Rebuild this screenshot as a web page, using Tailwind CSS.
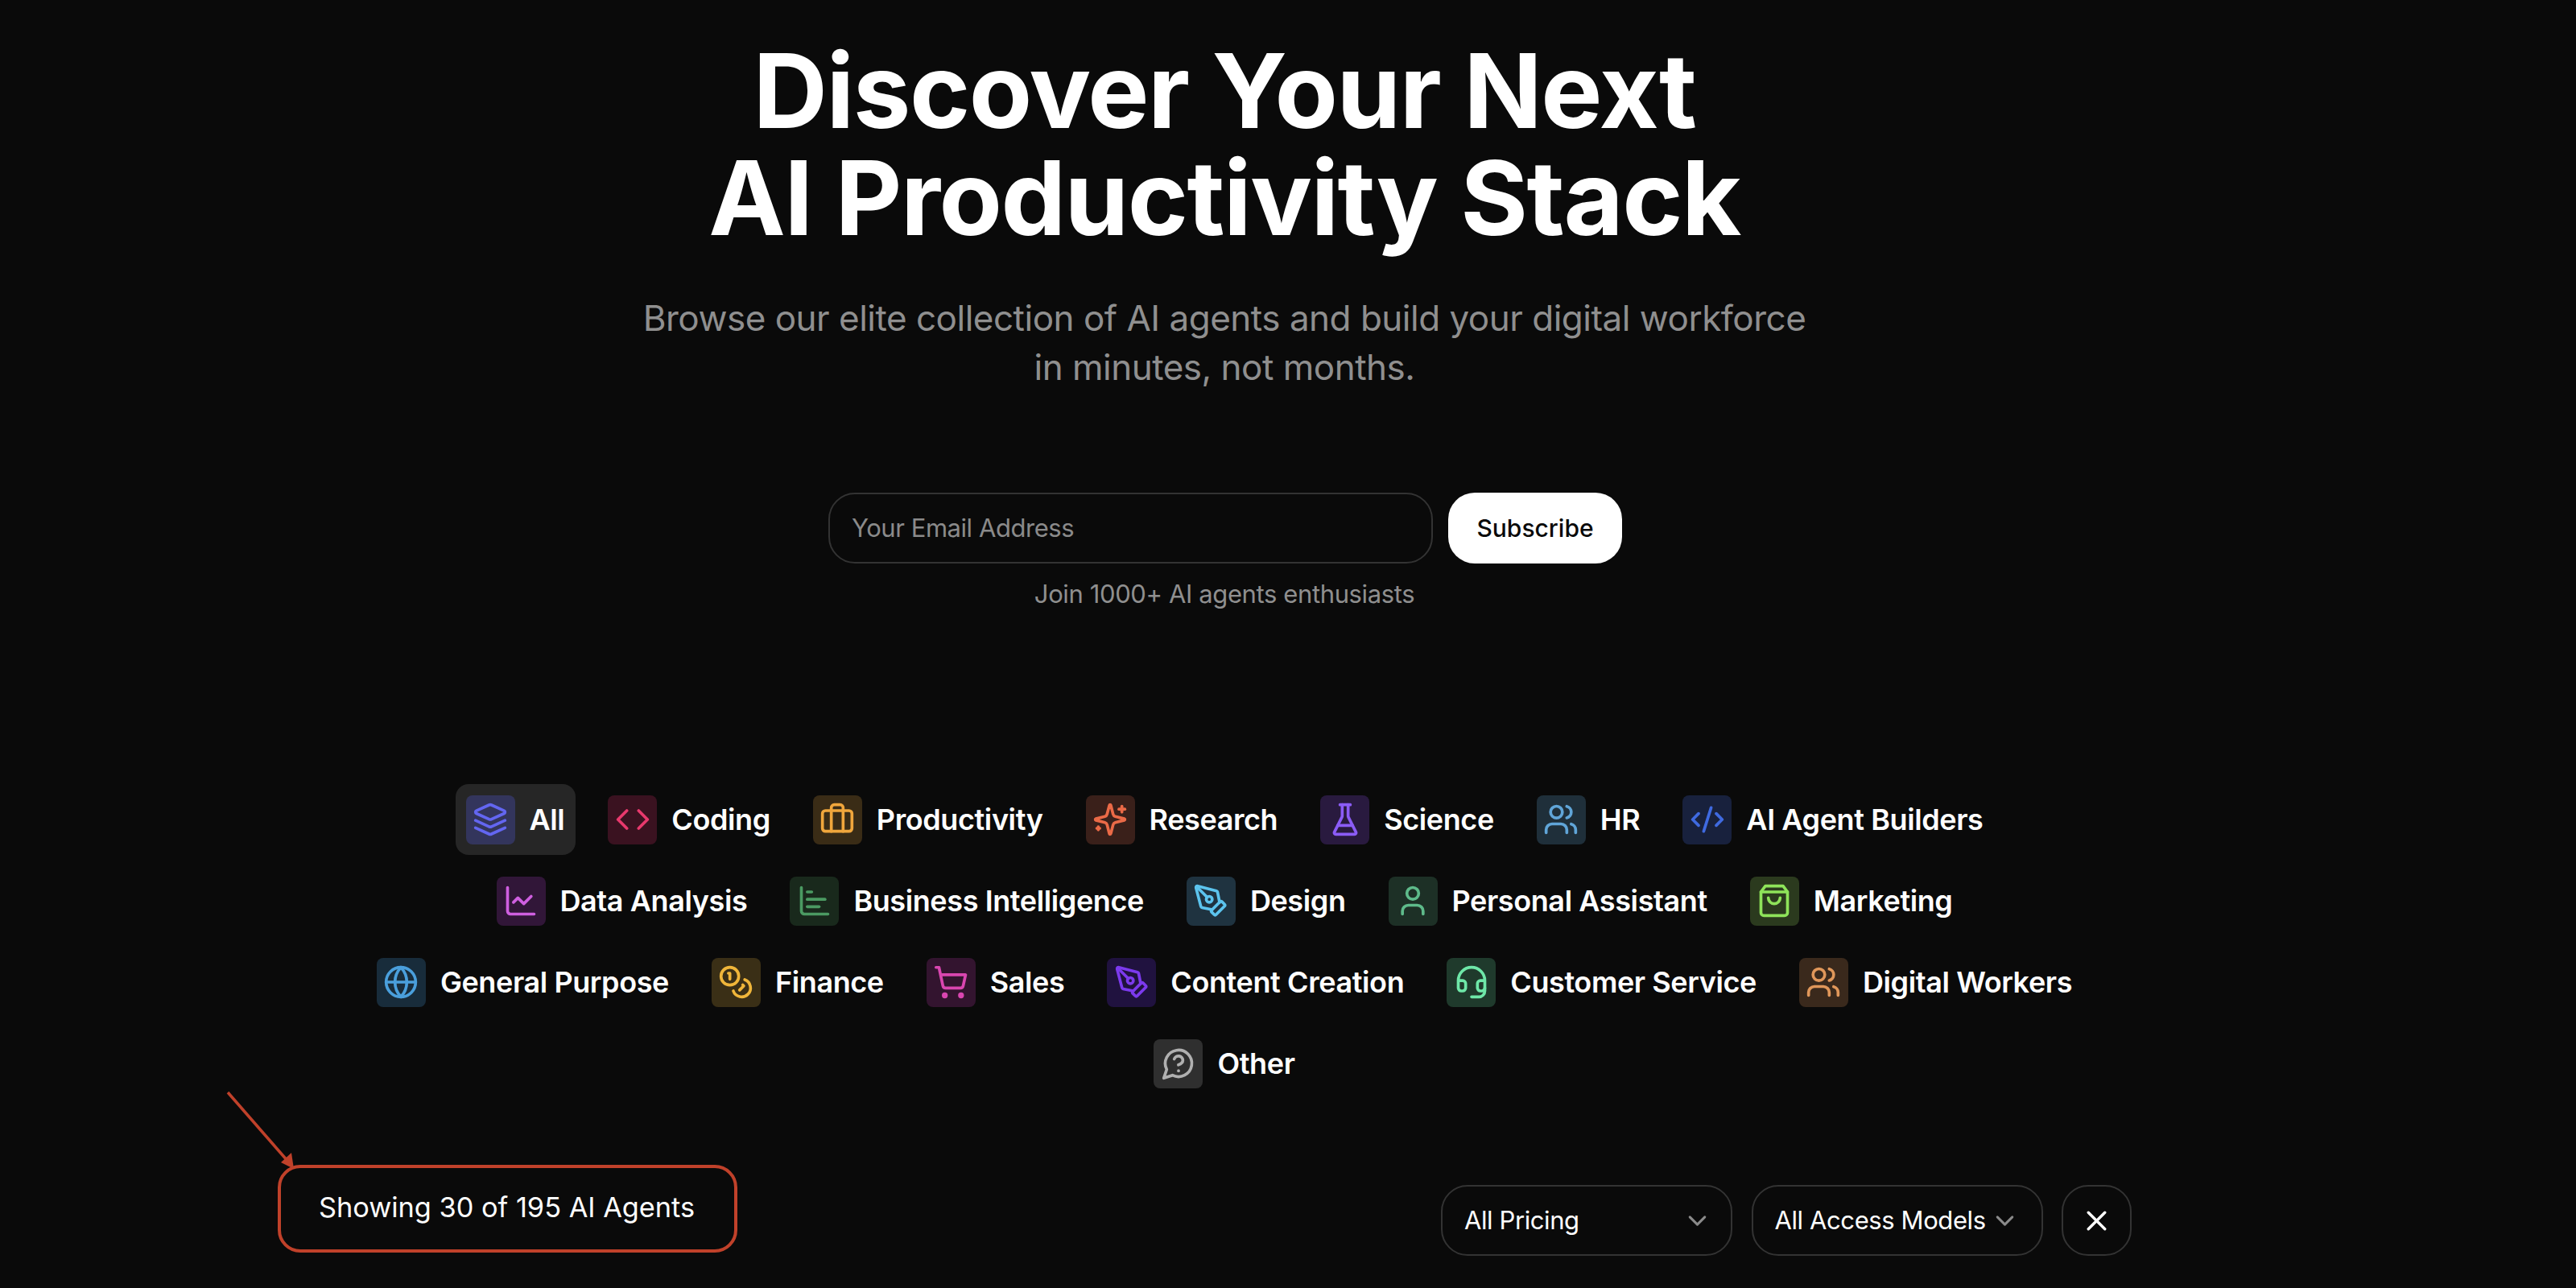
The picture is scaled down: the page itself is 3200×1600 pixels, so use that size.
<!DOCTYPE html>
<html><head><meta charset="utf-8"><script src="https://cdn.jsdelivr.net/npm/@tailwindcss/browser@4"></script></head>
<body class="bg-[#0a0a0a] font-['Inter',sans-serif] text-white overflow-hidden">
<div class="relative w-[3200px] h-[1600px] overflow-hidden">
<div class="w-[3042px] flex flex-col items-center">
<h1 class="mt-[46px] text-[128px] leading-[133px] font-[650] tracking-[-1.5px] text-center">Discover Your Next<br>AI Productivity Stack</h1>
<p class="mt-[53px] text-[44px] leading-[61px] tracking-[-0.5px] text-[#8f8f8f] text-center">Browse our elite collection of AI agents and build your digital workforce<br>in minutes, not months.</p>
<div class="mt-[125px] flex gap-[19px] translate-x-[1px]">
<div class="w-[751px] h-[88px] rounded-[33px] border-2 border-[#333] flex items-center px-[27px] text-[31px] tracking-[-0.45px] text-[#8a8a8a]">Your Email Address</div>
<div class="w-[216px] h-[88px] rounded-[33px] bg-white text-[#0a0a0a] flex items-center justify-center text-[30px] font-medium">Subscribe</div>
</div>
<p class="mt-[18px] text-[31px] leading-[40px] tracking-[-0.38px] text-[#8f8f8f]">Join 1000+ AI agents enthusiasts</p>

<div class="mt-[216px] flex flex-col items-center gap-y-[13px] text-[36px] font-semibold tracking-[-0.4px]">
<div class="flex gap-x-[27px] h-[88px]">
<div class="flex items-center gap-[18px] p-[13px] pr-[14px] rounded-[16px] bg-[#262626]"><span class="w-[61px] h-[61px] rounded-[8px] flex items-center justify-center bg-[#33355c] text-[#6366f1]"><svg class="w-[44px] h-[44px]" viewBox="0 0 24 24" fill="none" stroke="currentColor" stroke-width="2" stroke-linecap="round" stroke-linejoin="round"><path d="m12.83 2.18a2 2 0 0 0-1.66 0L2.6 6.08a1 1 0 0 0 0 1.83l8.58 3.91a2 2 0 0 0 1.66 0l8.58-3.9a1 1 0 0 0 0-1.83Z"/><path d="m22 17.65-9.17 4.16a2 2 0 0 1-1.66 0L2 17.65"/><path d="m22 12.65-9.17 4.16a2 2 0 0 1-1.66 0L2 12.65"/></svg></span>All</div>
<div class="flex items-center gap-[18px] p-[13px]"><span class="w-[61px] h-[61px] rounded-[8px] flex items-center justify-center bg-[#3a1220] text-[#e8396d]"><svg class="w-[44px] h-[44px]" viewBox="0 0 24 24" fill="none" stroke="currentColor" stroke-width="2" stroke-linecap="round" stroke-linejoin="round"><path d="m16 18 6-6-6-6"/><path d="m8 6-6 6 6 6"/></svg></span>Coding</div>
<div class="flex items-center gap-[18px] p-[13px]"><span class="w-[61px] h-[61px] rounded-[8px] flex items-center justify-center bg-[#3a2c16] text-[#f0a63c]"><svg class="w-[44px] h-[44px]" viewBox="0 0 24 24" fill="none" stroke="currentColor" stroke-width="2" stroke-linecap="round" stroke-linejoin="round"><path d="M16 20V4a2 2 0 0 0-2-2h-4a2 2 0 0 0-2 2v16"/><rect width="20" height="14" x="2" y="6" rx="2"/></svg></span>Productivity</div>
<div class="flex items-center gap-[18px] p-[13px]"><span class="w-[61px] h-[61px] rounded-[8px] flex items-center justify-center bg-[#3a201a] text-[#ea6a47]"><svg class="w-[44px] h-[44px]" viewBox="0 0 24 24" fill="none" stroke="currentColor" stroke-width="2" stroke-linecap="round" stroke-linejoin="round"><path d="M9.937 15.5A2 2 0 0 0 8.5 14.063l-6.135-1.582a.5.5 0 0 1 0-.962L8.5 9.936A2 2 0 0 0 9.937 8.5l1.582-6.135a.5.5 0 0 1 .963 0L14.063 8.5A2 2 0 0 0 15.5 9.937l6.135 1.581a.5.5 0 0 1 0 .964L15.5 14.063a2 2 0 0 0-1.437 1.437l-1.582 6.135a.5.5 0 0 1-.963 0z"/><path d="M20 3v4"/><path d="M22 5h-4"/><path d="M4 17v2"/><path d="M5 18H3"/></svg></span>Research</div>
<div class="flex items-center gap-[18px] p-[13px]"><span class="w-[61px] h-[61px] rounded-[8px] flex items-center justify-center bg-[#291a3f] text-[#8b5cf6]"><svg class="w-[44px] h-[44px]" viewBox="0 0 24 24" fill="none" stroke="currentColor" stroke-width="2" stroke-linecap="round" stroke-linejoin="round"><path d="M10 2v7.527a2 2 0 0 1-.211.896L4.72 20.55a1 1 0 0 0 .9 1.45h12.76a1 1 0 0 0 .9-1.45l-5.069-10.127A2 2 0 0 1 14 9.527V2"/><path d="M8.5 2h7"/><path d="M7 16h10"/></svg></span>Science</div>
<div class="flex items-center gap-[18px] p-[13px]"><span class="w-[61px] h-[61px] rounded-[8px] flex items-center justify-center bg-[#1f2f3a] text-[#60a5d8]"><svg class="w-[44px] h-[44px]" viewBox="0 0 24 24" fill="none" stroke="currentColor" stroke-width="2" stroke-linecap="round" stroke-linejoin="round"><path d="M16 21v-2a4 4 0 0 0-4-4H6a4 4 0 0 0-4 4v2"/><circle cx="9" cy="7" r="4"/><path d="M22 21v-2a4 4 0 0 0-3-3.87"/><path d="M16 3.13a4 4 0 0 1 0 7.75"/></svg></span>HR</div>
<div class="flex items-center gap-[18px] p-[13px]"><span class="w-[61px] h-[61px] rounded-[8px] flex items-center justify-center bg-[#18213d] text-[#3f6ae0]"><svg class="w-[44px] h-[44px]" viewBox="0 0 24 24" fill="none" stroke="currentColor" stroke-width="2" stroke-linecap="round" stroke-linejoin="round"><path d="m18 16 4-4-4-4"/><path d="m6 8-4 4 4 4"/><path d="m14.5 4-5 16"/></svg></span>AI Agent Builders</div>
</div>
<div class="flex gap-x-[27px] h-[88px]">
<div class="flex items-center gap-[18px] p-[13px]"><span class="w-[61px] h-[61px] rounded-[8px] flex items-center justify-center bg-[#311638] text-[#cf5fe0]"><svg class="w-[44px] h-[44px]" viewBox="0 0 24 24" fill="none" stroke="currentColor" stroke-width="2" stroke-linecap="round" stroke-linejoin="round"><path d="M3 3v16a2 2 0 0 0 2 2h16"/><path d="m19 9-5 5-4-4-3 3"/></svg></span>Data Analysis</div>
<div class="flex items-center gap-[18px] p-[13px]"><span class="w-[61px] h-[61px] rounded-[8px] flex items-center justify-center bg-[#19291c] text-[#4b9a62]"><svg class="w-[44px] h-[44px]" viewBox="0 0 24 24" fill="none" stroke="currentColor" stroke-width="2" stroke-linecap="round" stroke-linejoin="round"><path d="M3 3v16a2 2 0 0 0 2 2h16"/><path d="M7 16h8"/><path d="M7 11h12"/><path d="M7 6h3"/></svg></span>Business Intelligence</div>
<div class="flex items-center gap-[18px] p-[13px]"><span class="w-[61px] h-[61px] rounded-[8px] flex items-center justify-center bg-[#1f3340] text-[#5cc4ee]"><svg class="w-[44px] h-[44px]" viewBox="0 0 24 24" fill="none" stroke="currentColor" stroke-width="2" stroke-linecap="round" stroke-linejoin="round"><path d="M15.707 21.293a1 1 0 0 1-1.414 0l-1.586-1.586a1 1 0 0 1 0-1.414l5.586-5.586a1 1 0 0 1 1.414 0l1.586 1.586a1 1 0 0 1 0 1.414z"/><path d="m18 13-1.375-6.874a1 1 0 0 0-.746-.776L3.235 2.028a1 1 0 0 0-1.207 1.207L5.35 15.879a1 1 0 0 0 .776.746L13 18"/><path d="m2.3 2.3 7.286 7.286"/><circle cx="11" cy="11" r="2"/></svg></span>Design</div>
<div class="flex items-center gap-[18px] p-[13px]"><span class="w-[61px] h-[61px] rounded-[8px] flex items-center justify-center bg-[#1d3026] text-[#5eba8a]"><svg class="w-[44px] h-[44px]" viewBox="0 0 24 24" fill="none" stroke="currentColor" stroke-width="2" stroke-linecap="round" stroke-linejoin="round"><path d="M19 21v-2a4 4 0 0 0-4-4H9a4 4 0 0 0-4 4v2"/><circle cx="12" cy="7" r="4"/></svg></span>Personal Assistant</div>
<div class="flex items-center gap-[18px] p-[13px]"><span class="w-[61px] h-[61px] rounded-[8px] flex items-center justify-center bg-[#2b3a1e] text-[#8ee35a]"><svg class="w-[44px] h-[44px]" viewBox="0 0 24 24" fill="none" stroke="currentColor" stroke-width="2" stroke-linecap="round" stroke-linejoin="round"><path d="M6 2 3 6v14a2 2 0 0 0 2 2h14a2 2 0 0 0 2-2V6l-3-4Z"/><path d="M3 6h18"/><path d="M16 10a4 4 0 0 1-8 0"/></svg></span>Marketing</div>
</div>
<div class="flex gap-x-[27px] h-[88px]">
<div class="flex items-center gap-[18px] p-[13px]"><span class="w-[61px] h-[61px] rounded-[8px] flex items-center justify-center bg-[#182c3b] text-[#4a9fdc]"><svg class="w-[44px] h-[44px]" viewBox="0 0 24 24" fill="none" stroke="currentColor" stroke-width="2" stroke-linecap="round" stroke-linejoin="round"><circle cx="12" cy="12" r="10"/><path d="M12 2a14.5 14.5 0 0 0 0 20 14.5 14.5 0 0 0 0-20"/><path d="M2 12h20"/></svg></span>General Purpose</div>
<div class="flex items-center gap-[18px] p-[13px]"><span class="w-[61px] h-[61px] rounded-[8px] flex items-center justify-center bg-[#3a2f16] text-[#f0b63a]"><svg class="w-[44px] h-[44px]" viewBox="0 0 24 24" fill="none" stroke="currentColor" stroke-width="2" stroke-linecap="round" stroke-linejoin="round"><circle cx="8" cy="8" r="6"/><path d="M18.09 10.37A6 6 0 1 1 10.34 18"/><path d="M7 6h1v4"/><path d="m16.71 13.88.7.71-2.82 2.82"/></svg></span>Finance</div>
<div class="flex items-center gap-[18px] p-[13px]"><span class="w-[61px] h-[61px] rounded-[8px] flex items-center justify-center bg-[#33142f] text-[#d946b0]"><svg class="w-[44px] h-[44px]" viewBox="0 0 24 24" fill="none" stroke="currentColor" stroke-width="2" stroke-linecap="round" stroke-linejoin="round"><circle cx="8" cy="21" r="1"/><circle cx="19" cy="21" r="1"/><path d="M2.05 2.05h2l2.66 12.42a2 2 0 0 0 2 1.58h9.78a2 2 0 0 0 1.95-1.57l1.65-7.43H5.12"/></svg></span>Sales</div>
<div class="flex items-center gap-[18px] p-[13px]"><span class="w-[61px] h-[61px] rounded-[8px] flex items-center justify-center bg-[#20123f] text-[#7c3aed]"><svg class="w-[44px] h-[44px]" viewBox="0 0 24 24" fill="none" stroke="currentColor" stroke-width="2" stroke-linecap="round" stroke-linejoin="round"><path d="M15.707 21.293a1 1 0 0 1-1.414 0l-1.586-1.586a1 1 0 0 1 0-1.414l5.586-5.586a1 1 0 0 1 1.414 0l1.586 1.586a1 1 0 0 1 0 1.414z"/><path d="m18 13-1.375-6.874a1 1 0 0 0-.746-.776L3.235 2.028a1 1 0 0 0-1.207 1.207L5.35 15.879a1 1 0 0 0 .776.746L13 18"/><path d="m2.3 2.3 7.286 7.286"/><circle cx="11" cy="11" r="2"/></svg></span>Content Creation</div>
<div class="flex items-center gap-[18px] p-[13px]"><span class="w-[61px] h-[61px] rounded-[8px] flex items-center justify-center bg-[#1f3a2c] text-[#6ee7a8]"><svg class="w-[44px] h-[44px]" viewBox="0 0 24 24" fill="none" stroke="currentColor" stroke-width="2" stroke-linecap="round" stroke-linejoin="round"><path d="M3 11h3a2 2 0 0 1 2 2v3a2 2 0 0 1-2 2H5a2 2 0 0 1-2-2v-5Zm0 0a9 9 0 1 1 18 0m0 0v5a2 2 0 0 1-2 2h-1a2 2 0 0 1-2-2v-3a2 2 0 0 1 2-2h3Z"/><path d="M21 16v2a4 4 0 0 1-4 4h-5"/></svg></span>Customer Service</div>
<div class="flex items-center gap-[18px] p-[13px]"><span class="w-[61px] h-[61px] rounded-[8px] flex items-center justify-center bg-[#3a291c] text-[#e0975a]"><svg class="w-[44px] h-[44px]" viewBox="0 0 24 24" fill="none" stroke="currentColor" stroke-width="2" stroke-linecap="round" stroke-linejoin="round"><path d="M16 21v-2a4 4 0 0 0-4-4H6a4 4 0 0 0-4 4v2"/><circle cx="9" cy="7" r="4"/><path d="M22 21v-2a4 4 0 0 0-3-3.87"/><path d="M16 3.13a4 4 0 0 1 0 7.75"/></svg></span>Digital Workers</div>
</div>
<div class="flex gap-x-[27px] h-[88px]">
<div class="flex items-center gap-[18px] p-[13px]"><span class="w-[61px] h-[61px] rounded-[8px] flex items-center justify-center bg-[#2f2f2f] text-[#b0b0b0]"><svg class="w-[44px] h-[44px]" viewBox="0 0 24 24" fill="none" stroke="currentColor" stroke-width="2" stroke-linecap="round" stroke-linejoin="round"><path d="M7.9 20A9 9 0 1 0 4 16.1L2 22Z"/><path d="M9.09 9a3 3 0 0 1 5.83 1c0 2-3 3-3 3"/><path d="M12 17h.01"/></svg></span>Other</div>
</div>
</div>

<div class="w-full mt-[107px] pl-[345px] pr-[394px] flex justify-between items-start">
<div class="w-[571px] h-[109px] -mt-[25px] pb-[4px] rounded-[28px] border-4 border-[#c0412a] flex items-center pl-[47px] text-[34.3px]">Showing 30 of 195 AI Agents</div>
<div class="flex gap-[23.5px] text-[31px] tracking-[-0.4px]">
<div class="w-[362px] h-[88px] rounded-[33px] border-2 border-[#333] flex items-center justify-between pl-[27px] pr-[23px]">All Pricing<svg class="w-[37px] h-[37px] text-[#8a8a8a]" viewBox="0 0 24 24" fill="none" stroke="currentColor" stroke-width="2" stroke-linecap="round" stroke-linejoin="round"><path d="m6 9 6 6 6-6"/></svg></div>
<div class="w-[362px] h-[88px] rounded-[33px] border-2 border-[#333] flex items-center justify-between pl-[27px] pr-[27px]">All Access Models<svg class="w-[37px] h-[37px] text-[#8a8a8a]" viewBox="0 0 24 24" fill="none" stroke="currentColor" stroke-width="2" stroke-linecap="round" stroke-linejoin="round"><path d="m6 9 6 6 6-6"/></svg></div>
<div class="w-[87px] h-[88px] rounded-[33px] border-2 border-[#333] flex items-center justify-center"><svg class="w-[41px] h-[41px]" viewBox="0 0 24 24" fill="none" stroke="currentColor" stroke-width="2" stroke-linecap="round" stroke-linejoin="round"><path d="M18 6 6 18"/><path d="m6 6 12 12"/></svg></div>
</div>
</div>
</div>
<svg class="absolute left-[270px] top-[1345px] w-[110px] h-[120px]" viewBox="270 1345 110 120" fill="none"><path d="M283 1357 L358 1443" stroke="#c0412a" stroke-width="3.5"/><path d="M365 1452 L349 1444 L362 1432 Z" fill="#c0412a"/></svg>
</div>
</body></html>
